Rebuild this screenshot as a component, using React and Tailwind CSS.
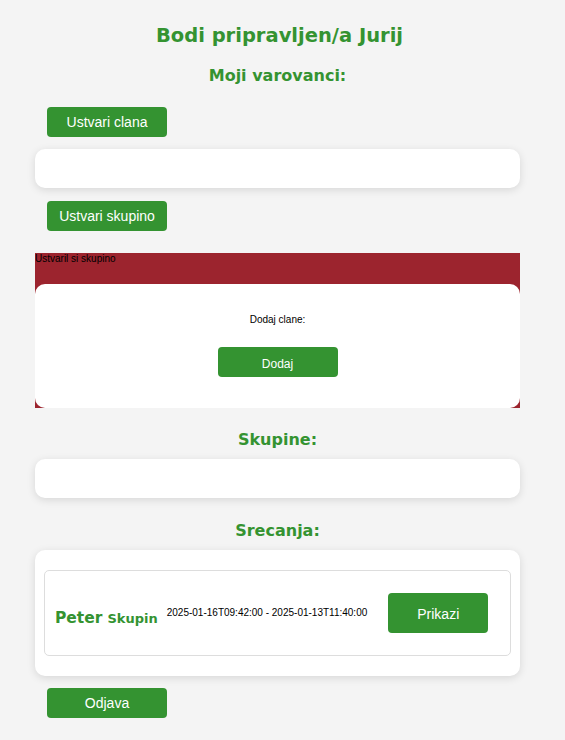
import React from "react";

const green = "bg-[#349331]";
const heading = "font-['DejaVu_Sans',Verdana,sans-serif] font-bold text-[#349331] text-center";

function Btn({ children, className = "" }) {
  return (
    <button className={`${green} text-white text-[14px] rounded-[4px] h-[30px] w-[120px] font-['Liberation_Sans',Arial,sans-serif] ${className}`}>
      {children}
    </button>
  );
}

export default function App() {
  return (
    <div className="min-h-screen bg-[#f4f4f4] font-['Liberation_Sans',Arial,sans-serif] pt-[24px]">
      <h1 className={`${heading} text-[19.5px] leading-[23px] pr-[6px]`}>Bodi pripravljen/a Jurij</h1>

      <div className="ml-[35px] w-[485px]">
        <h2 className={`${heading} text-[16px] leading-[20px] mt-[19px]`}>Moji varovanci:</h2>
        <Btn className="ml-[12px] mt-[21px] block">Ustvari clana</Btn>
        <div className="bg-white rounded-[10px] h-[39px] mt-[12px] shadow-[0_2px_8px_rgba(0,0,0,0.12)]" />
        <Btn className="ml-[12px] mt-[13px] block">Ustvari skupino</Btn>

        {/* modal-ish panel */}
        <div className="bg-[#9c242e] mt-[22px] h-[155px] flex flex-col">
          <p className="text-[10px] leading-[12px] text-black h-[31px]">Ustvaril si skupino</p>
          <div className="bg-white rounded-[10px] flex-1 flex flex-col items-center pt-[30px]">
            <p className="text-[10px] leading-[12px] text-black">Dodaj clane:</p>
            <button className={`${green} text-white text-[12px] rounded-[4px] h-[30px] w-[120px] mt-[21px] pt-[4px]`}>Dodaj</button>
          </div>
        </div>

        <h2 className={`${heading} text-[16px] leading-[20px] mt-[22px]`}>Skupine:</h2>
        <div className="bg-white rounded-[10px] h-[39px] mt-[9px] shadow-[0_2px_8px_rgba(0,0,0,0.12)]" />

        <h2 className={`${heading} text-[16px] leading-[20px] mt-[23px]`}>Srecanja:</h2>
        <div className="bg-white rounded-[10px] mt-[9px] px-[9px] py-[20px] shadow-[0_2px_8px_rgba(0,0,0,0.12)]">
          <div className="border border-[#dddddd] rounded-[5px] h-[86px] flex items-center pl-[10px]">
            <div className="flex items-baseline pt-[12px] font-['DejaVu_Sans',Verdana,sans-serif] font-bold text-[#349331]">
              <span className="text-[15.5px]">Peter</span>
              <span className="text-[13px] ml-[5px]">Skupin</span>
            </div>
            <p className="text-[10px] leading-[12px] text-black ml-[9px]">2025-01-16T09:42:00 - 2025-01-13T11:40:00</p>
            <button className={`${green} text-white text-[14px] rounded-[4px] h-[40px] w-[100px] ml-[21px] pt-[3px]`}>Prikazi</button>
          </div>
        </div>
        <Btn className="ml-[12px] mt-[12px] block">Odjava</Btn>
      </div>
    </div>
  );
}
